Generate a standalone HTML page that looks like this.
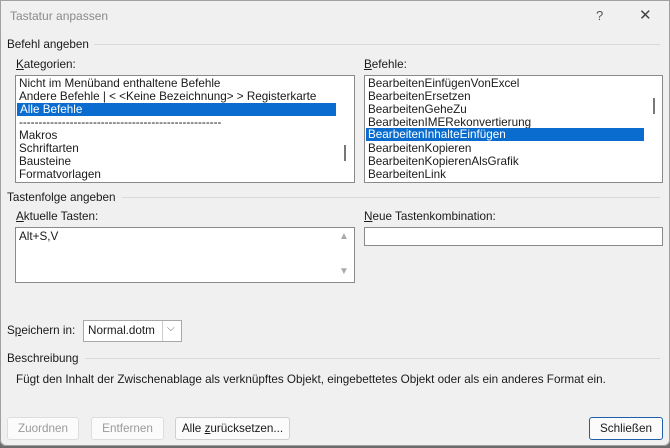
<!DOCTYPE html>
<html><head><meta charset="utf-8"><style>
*{box-sizing:border-box;margin:0;padding:0}
body{width:670px;height:448px;background:#6b6b6b;font-family:"Liberation Sans",sans-serif;font-size:11.7px;color:#1a1a1a;position:relative;overflow:hidden}
.dlg{position:absolute;left:0;top:0;width:670px;height:446px;background:#f0f0f0;box-shadow:inset 0 0 0 1px #a0a0a0;border-radius:0 0 6px 6px}
.a{position:absolute;white-space:nowrap}
.line{position:absolute;height:1px;background:#d9d9d9}
.box{position:absolute;background:#fff;border:1px solid #8a8a8a}
.it{position:absolute;left:3px;height:13px;line-height:13px;white-space:nowrap}
.sel{background:#0a6ccf;color:#fff}
.thumb{position:absolute;width:2px;background:#777}
.btn{position:absolute;height:23px;border:1px solid #cfcfcf;background:#fbfbfb;border-radius:3px;text-align:center;line-height:21px}
u{text-decoration:underline}
</style></head><body><div class="dlg">
<div class="a" style="left:10px;top:9px;color:#8a8a8a;font-size:12px">Tastatur anpassen</div>
<div class="a" style="left:596px;top:8px;color:#555;font-size:13px">?</div>
<div class="a" style="left:639px;top:6px;color:#444;font-size:15px">✕</div>

<div class="a" style="left:7px;top:38px">Befehl angeben</div>
<div class="line" style="left:94px;top:44px;width:566px"></div>
<div class="a" style="left:16px;top:58px"><u>K</u>ategorien:</div>
<div class="box" style="left:15px;top:75px;width:340px;height:108px">
<div class="it" style="top:1px">Nicht im Menüband enthaltene Befehle</div>
<div class="it" style="top:14px">Andere Befehle | &lt; &lt;Keine Bezeichnung&gt; &gt; Registerkarte</div>
<div class="it sel" style="top:27px;left:1px;width:319px;padding-left:3px">Alle Befehle</div>
<div class="it" style="top:40px">----------------------------------------------------</div>
<div class="it" style="top:53px">Makros</div>
<div class="it" style="top:66px">Schriftarten</div>
<div class="it" style="top:79px">Bausteine</div>
<div class="it" style="top:92px">Formatvorlagen</div>
<div class="thumb" style="left:328px;top:69px;height:16px"></div>
</div>
<div class="a" style="left:364px;top:58px"><u>B</u>efehle:</div>
<div class="box" style="left:364px;top:75px;width:299px;height:108px">
<div class="it" style="top:1px">BearbeitenEinfügenVonExcel</div>
<div class="it" style="top:14px">BearbeitenErsetzen</div>
<div class="it" style="top:27px">BearbeitenGeheZu</div>
<div class="it" style="top:40px">BearbeitenIMERekonvertierung</div>
<div class="it sel" style="top:52px;left:1px;width:278px;padding-left:2px">BearbeitenInhalteEinfügen</div>
<div class="it" style="top:66px">BearbeitenKopieren</div>
<div class="it" style="top:79px">BearbeitenKopierenAlsGrafik</div>
<div class="it" style="top:92px">BearbeitenLink</div>
<div class="thumb" style="left:288px;top:22px;height:16px"></div>
</div>

<div class="a" style="left:7px;top:191px">Tastenfolge angeben</div>
<div class="line" style="left:122px;top:197px;width:538px"></div>
<div class="a" style="left:16px;top:210px"><u>A</u>ktuelle Tasten:</div>
<div class="box" style="left:15px;top:227px;width:340px;height:56px">
<div class="it" style="top:2px">Alt+S,V</div>
<div class="a" style="left:323px;top:3px;color:#aaa;font-size:10px">▲</div>
<div class="a" style="left:323px;top:38px;color:#aaa;font-size:10px">▼</div>
</div>
<div class="a" style="left:364px;top:210px"><u>N</u>eue Tastenkombination:</div>
<div class="box" style="left:364px;top:227px;width:299px;height:19px"></div>

<div class="a" style="left:7px;top:324px">S<u>p</u>eichern in:</div>
<div class="box" style="left:83px;top:320px;width:99px;height:22px;border-color:#a8a8a8">
<div class="a" style="left:4px;top:3px">Normal.dotm</div>
<div style="position:absolute;left:78px;top:0;width:1px;height:20px;background:#ccc"></div>
<div class="a" style="left:83px;top:2px;color:#666;font-size:10px">⌵</div>
</div>

<div class="a" style="left:7px;top:352px">Beschreibung</div>
<div class="line" style="left:85px;top:358px;width:575px"></div>
<div class="a" style="left:16px;top:373px">Fügt den Inhalt der Zwischenablage als verknüpftes Objekt, eingebettetes Objekt oder als ein anderes Format ein.</div>

<div class="btn" style="left:7px;top:417px;width:72px;color:#9a9a9a;border-color:#ddd">Zuordnen</div>
<div class="btn" style="left:91px;top:417px;width:73px;color:#9a9a9a;border-color:#ddd">Entfernen</div>
<div class="btn" style="left:175px;top:417px;width:115px">Alle <u>z</u>urücksetzen...</div>
<div class="btn" style="left:589px;top:417px;width:74px;border:1px solid #1f5fa8">Schließen</div>
</div></body></html>
